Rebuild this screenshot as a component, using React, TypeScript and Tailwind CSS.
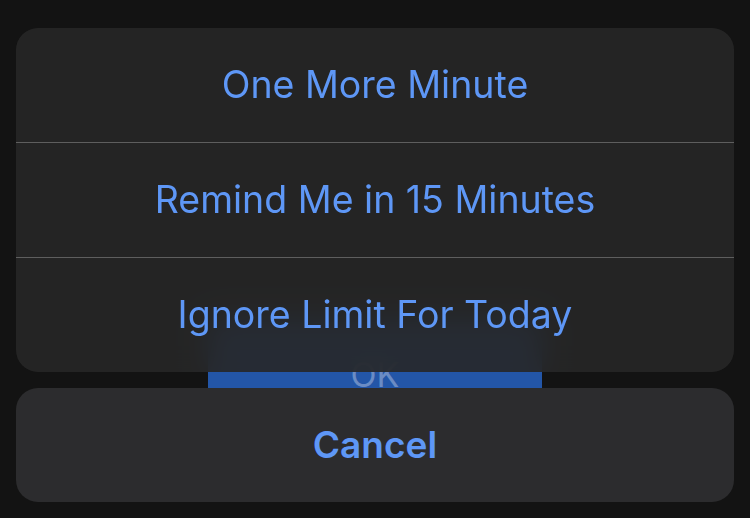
import React from "react";

export default function App() {
  const font = { fontFamily: "Inter, 'Noto Sans', sans-serif" };
  return (
    <div className="relative w-[750px] h-[518px] overflow-hidden bg-[#131313]" style={font}>
      {/* background OK button peeking behind the sheet */}
      <div className="absolute left-[208px] top-[318px] w-[334px] h-[110px] rounded-[14px] bg-[#2356a8] flex items-end justify-center pb-[36px]">
        <span className="text-[34px] leading-none text-[#6b8cc4]">OK</span>
      </div>

      <div className="relative flex flex-col gap-4 px-4 pt-7">
        <div className="flex flex-col rounded-[22px] bg-[#272727]/[0.9] backdrop-blur-[14px] overflow-hidden">
          <div className="h-[114px] flex items-center justify-center text-[37.5px] text-[#5e97f6]">
            One More Minute
          </div>
          <div className="h-px bg-[#5e5e5e]" />
          <div className="h-[114px] flex items-center justify-center text-[37.5px] text-[#5e97f6]">
            Remind Me in 15 Minutes
          </div>
          <div className="h-px bg-[#5e5e5e]" />
          <div className="h-[114px] flex items-center justify-center text-[37.5px] text-[#5e97f6]">
            Ignore Limit For Today
          </div>
        </div>
        <div className="h-[114px] rounded-[22px] bg-[#2c2c2e] flex items-center justify-center text-[37px] font-semibold text-[#5e97f6]">
          Cancel
        </div>
      </div>
    </div>
  );
}
